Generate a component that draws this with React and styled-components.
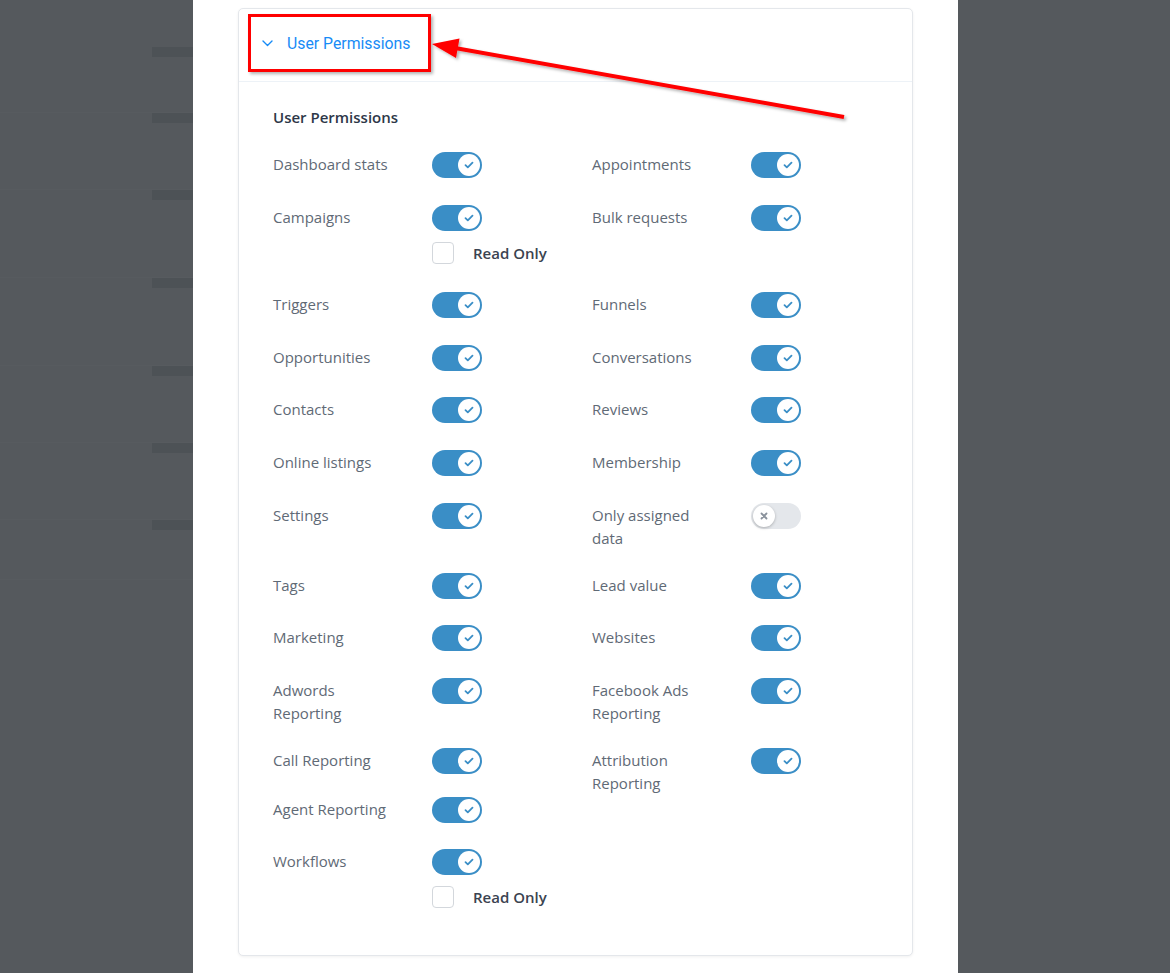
import styled, { createGlobalStyle } from "styled-components";

const GlobalStyle = createGlobalStyle`
  * { box-sizing: border-box; }
  body {
    margin: 0;
    font-family: "Open Sans", "Liberation Sans", sans-serif;
    background: #55595d;
  }
`;

const Page = styled.div`
  position: relative;
  display: flex;
  min-height: 973px;
  background: #55595d;
  overflow: hidden;
`;

const Backdrop = styled.div`
  width: 193px;
  flex-shrink: 0;
  display: flex;
  flex-direction: column;
  align-items: flex-end;
  padding-top: 47px;
`;

const GhostRow = styled.div`
  height: ${(p) => p.$h}px;
  width: 100%;
  display: flex;
  justify-content: flex-end;
  border-bottom: 1px solid rgba(255, 255, 255, 0.015);
`;

const GhostBar = styled.div`
  width: 41px;
  height: 10px;
  background: #4d5256;
`;

const Modal = styled.div`
  width: 765px;
  flex-shrink: 0;
  background: #fff;
  padding: 8px 45px 0;
`;

const Card = styled.section`
  width: 675px;
  border: 1px solid #e4e7eb;
  border-radius: 5px;
  box-shadow: 0 1px 3px rgba(0, 0, 0, 0.06);
  background: #fff;
`;

const CardHeader = styled.div`
  height: 73px;
  display: flex;
  align-items: center;
  gap: 14px;
  padding: 0 0 4px 23px;
  border-bottom: 1px solid #edf2f7;
  color: #188bf6;
  font-family: Roboto, "Liberation Sans", sans-serif;
  font-size: 15.8px;
  font-weight: 400;
`;

const CardBody = styled.div`
  padding: 24px 34px 41px;
`;

const Title = styled.h3`
  margin: 0 0 24px;
  font-size: 15px;
  line-height: 22px;
  font-weight: 600;
  color: #2d3748;
`;

const Grid = styled.div`
  display: grid;
  grid-template-columns: 319px 1fr;
  row-gap: 22.6px;
`;

const Item = styled.div`
  display: flex;
  align-items: flex-start;
  min-height: ${(p) => (p.$compact ? 26 : 30)}px;
  grid-row: ${(p) => (p.$span ? "span 2" : "auto")};
`;

const Label = styled.div`
  width: 159px;
  padding-right: 36px;
  padding-top: 1px;
  font-size: 15px;
  line-height: 23.3px;
  color: #5f6a76;
`;

const Controls = styled.div`
  display: flex;
  flex-direction: column;
`;

const Switch = styled.span`
  position: relative;
  display: inline-flex;
  align-items: center;
  justify-content: ${(p) => (p.$on ? "flex-end" : "flex-start")};
  width: 50px;
  height: 26px;
  padding: 2px;
  border-radius: 13px;
  background: ${(p) => (p.$on ? "#3a8ec6" : "#e4e7eb")};
`;

const Knob = styled.span`
  width: 22px;
  height: 22px;
  border-radius: 50%;
  background: #fff;
  display: flex;
  align-items: center;
  justify-content: center;
  box-shadow: ${(p) => (p.$on ? "none" : "0 1px 3px rgba(0,0,0,0.25)")};
`;

const CheckRow = styled.label`
  display: flex;
  align-items: center;
  gap: 19px;
  margin: 11px 0 6px;
  font-size: 15px;
  font-weight: 600;
  color: #3b4350;
`;

const Box = styled.span`
  width: 22px;
  height: 22px;
  border: 1px solid #d3d7dc;
  border-radius: 4px;
  background: #fff;
`;

const RedBox = styled.div`
  position: absolute;
  left: 248px;
  top: 14px;
  width: 183px;
  height: 58px;
  border: 3px solid #ff0000;
  box-shadow: 2px 2px 3px rgba(0, 0, 0, 0.3);
  pointer-events: none;
`;

const Overlay = styled.svg`
  position: absolute;
  left: 0;
  top: 0;
  pointer-events: none;
`;

const Chevron = () => (
  <svg width="11" height="7" viewBox="0 0 11 7" fill="none">
    <path d="M1 1l4.5 4.5L10 1" stroke="#188bf6" strokeWidth="1.4" strokeLinecap="round" strokeLinejoin="round" />
  </svg>
);

const Toggle = ({ on = true }) => (
  <Switch $on={on}>
    <Knob $on={on}>
      {on ? (
        <svg width="10" height="8" viewBox="0 0 10 8" fill="none">
          <path d="M1.5 4.2l2.3 2.2L8.5 1.6" stroke="#3a8ec6" strokeWidth="1.8" strokeLinecap="round" strokeLinejoin="round" />
        </svg>
      ) : (
        <svg width="8" height="8" viewBox="0 0 8 8" fill="none">
          <path d="M1.5 1.5l5 5M6.5 1.5l-5 5" stroke="#8a929c" strokeWidth="1.8" strokeLinecap="round" />
        </svg>
      )}
    </Knob>
  </Switch>
);

const permissions = [
  { label: "Dashboard stats" },
  { label: "Appointments" },
  { label: "Campaigns", readOnly: true },
  { label: "Bulk requests" },
  { label: "Triggers" },
  { label: "Funnels" },
  { label: "Opportunities" },
  { label: "Conversations" },
  { label: "Contacts" },
  { label: "Reviews" },
  { label: "Online listings" },
  { label: "Membership" },
  { label: "Settings" },
  { label: "Only assigned data", off: true },
  { label: "Tags" },
  { label: "Lead value" },
  { label: "Marketing" },
  { label: "Websites" },
  { label: "Adwords Reporting" },
  { label: "Facebook Ads Reporting" },
  { label: "Call Reporting", compact: true },
  { label: "Attribution Reporting", span: true },
  { label: "Agent Reporting" },
  { label: "Workflows", readOnly: true },
];

const ghostRows = [66, 77, 88, 88, 77, 77, 60];

export default function App() {
  return (
    <>
      <GlobalStyle />
      <Page>
        <Backdrop>
          {ghostRows.map((h, i) => (
            <GhostRow key={i} $h={h}>
              <GhostBar />
            </GhostRow>
          ))}
        </Backdrop>
        <Modal>
          <Card>
            <CardHeader>
              <Chevron />
              <span>User Permissions</span>
            </CardHeader>
            <CardBody>
              <Title>User Permissions</Title>
              <Grid>
                {permissions.map((p) => (
                  <Item key={p.label} $span={p.span} $compact={p.compact}>
                    <Label>{p.label}</Label>
                    <Controls>
                      <Toggle on={!p.off} />
                      {p.readOnly && (
                        <CheckRow>
                          <Box />
                          Read Only
                        </CheckRow>
                      )}
                    </Controls>
                  </Item>
                ))}
              </Grid>
            </CardBody>
          </Card>
        </Modal>
        <RedBox />
        <Overlay width="1170" height="973" viewBox="0 0 1170 973">
          <defs>
            <filter id="sh" x="-10%" y="-50%" width="120%" height="200%">
              <feDropShadow dx="2" dy="2" stdDeviation="1.5" floodColor="#000" floodOpacity="0.3" />
            </filter>
          </defs>
          <g filter="url(#sh)">
            <line x1="844" y1="117" x2="455" y2="48" stroke="#ff0000" strokeWidth="4" />
            <polygon points="432,44 459.5,38.5 456,58" fill="#ff0000" />
          </g>
        </Overlay>
      </Page>
    </>
  );
}
